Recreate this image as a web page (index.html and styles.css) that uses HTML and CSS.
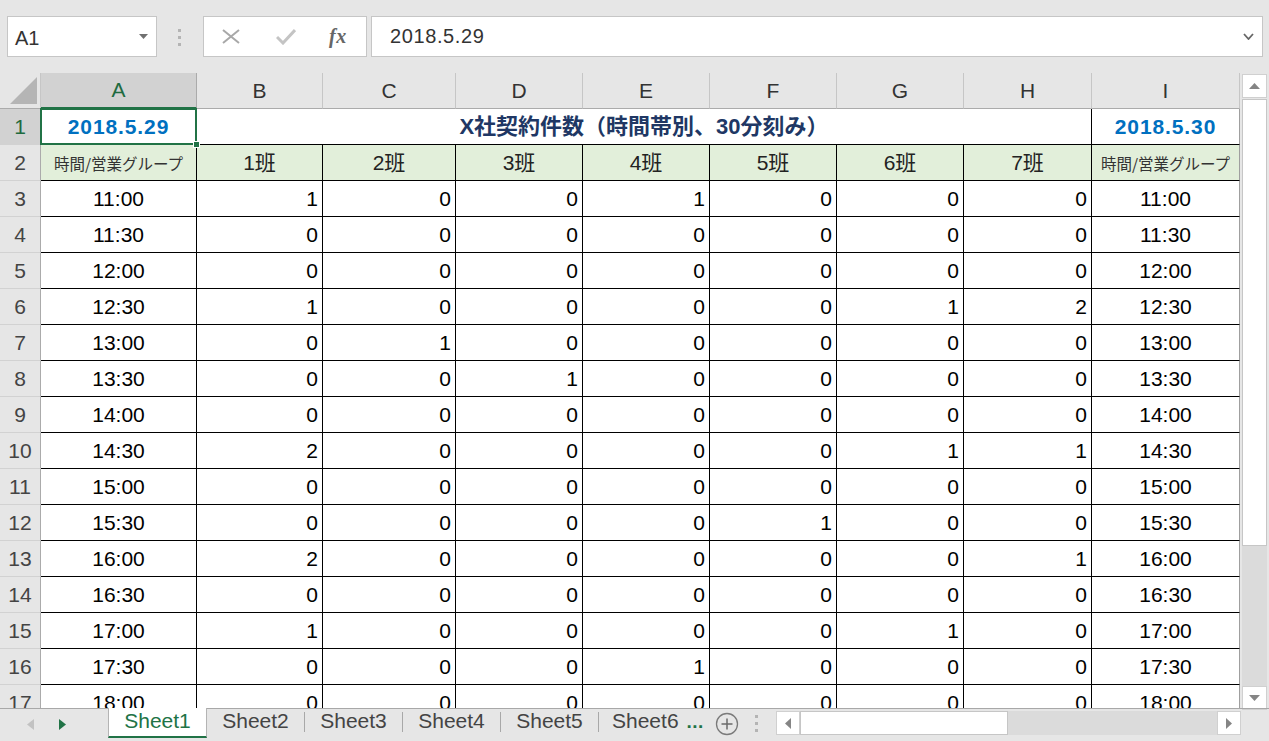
FILE: index.html
```html
<!DOCTYPE html>
<html lang="ja">
<head>
<meta charset="utf-8">
<title>Excel</title>
<link rel="stylesheet" href="styles.css">
</head>
<body>
<div class="app">
  <div class="toolbar">
    <div class="namebox">
      <span class="nb-text">A1</span>
      <svg width="9" height="5" viewBox="0 0 9 5"><path d="M0 0h9L4.5 5z" fill="#707070"/></svg>
    </div>
    <div class="sep">
      <svg width="4" height="18" viewBox="0 0 4 18"><rect x="0" y="0" width="3" height="3" fill="#b4b4b4"/><rect x="0" y="7" width="3" height="3" fill="#b4b4b4"/><rect x="0" y="14" width="3" height="3" fill="#b4b4b4"/></svg>
    </div>
    <div class="fxbox">
      <svg class="ico-x" width="18" height="15" viewBox="0 0 18 15"><path d="M1 1L17 14M17 1L1 14" stroke="#a8a8a8" stroke-width="2" fill="none"/></svg>
      <svg class="ico-ok" width="20" height="16" viewBox="0 0 20 16"><path d="M1 8L7 14L19 1" stroke="#c4c4c4" stroke-width="3" fill="none"/></svg>
      <span class="fx">fx</span>
    </div>
    <div class="formula">
      <span>2018.5.29</span>
      <svg width="11" height="7" viewBox="0 0 11 7"><path d="M1 1L5.5 6L10 1" stroke="#666" stroke-width="1.8" fill="none"/></svg>
    </div>
  </div>

  <div class="main">
    <div class="grid-wrap">
      <table class="grid">
        <colgroup>
          <col style="width:41px"><col style="width:156px"><col style="width:126px"><col style="width:133px"><col style="width:127px"><col style="width:127px"><col style="width:127px"><col style="width:127px"><col style="width:128px"><col style="width:148px">
        </colgroup>
        <thead>
          <tr class="hrow">
            <th class="corner"><svg width="41" height="35" viewBox="0 0 41 35"><path d="M10 31H37V4z" fill="#b5b5b5"/></svg></th>
            <th class="ch sel">A</th><th class="ch">B</th><th class="ch">C</th><th class="ch">D</th><th class="ch">E</th><th class="ch">F</th><th class="ch">G</th><th class="ch">H</th><th class="ch">I</th>
          </tr>
        </thead>
        <tbody>
          <tr>
            <th class="rh sel">1</th>
            <td class="date active">2018.5.29</td>
            <td class="title" colspan="7">X社契約件数（時間帯別、30分刻み）</td>
            <td class="date last">2018.5.30</td>
          </tr>
          <tr class="green">
            <th class="rh">2</th>
            <td class="lbl">時間/営業グループ</td>
            <td>1班</td><td>2班</td><td>3班</td><td>4班</td><td>5班</td><td>6班</td><td>7班</td>
            <td class="lbl last">時間/営業グループ</td>
          </tr>
          <tr><th class="rh">3</th><td class="t">11:00</td><td class="n">1</td><td class="n">0</td><td class="n">0</td><td class="n">1</td><td class="n">0</td><td class="n">0</td><td class="n">0</td><td class="t last">11:00</td></tr>
          <tr><th class="rh">4</th><td class="t">11:30</td><td class="n">0</td><td class="n">0</td><td class="n">0</td><td class="n">0</td><td class="n">0</td><td class="n">0</td><td class="n">0</td><td class="t last">11:30</td></tr>
          <tr><th class="rh">5</th><td class="t">12:00</td><td class="n">0</td><td class="n">0</td><td class="n">0</td><td class="n">0</td><td class="n">0</td><td class="n">0</td><td class="n">0</td><td class="t last">12:00</td></tr>
          <tr><th class="rh">6</th><td class="t">12:30</td><td class="n">1</td><td class="n">0</td><td class="n">0</td><td class="n">0</td><td class="n">0</td><td class="n">1</td><td class="n">2</td><td class="t last">12:30</td></tr>
          <tr><th class="rh">7</th><td class="t">13:00</td><td class="n">0</td><td class="n">1</td><td class="n">0</td><td class="n">0</td><td class="n">0</td><td class="n">0</td><td class="n">0</td><td class="t last">13:00</td></tr>
          <tr><th class="rh">8</th><td class="t">13:30</td><td class="n">0</td><td class="n">0</td><td class="n">1</td><td class="n">0</td><td class="n">0</td><td class="n">0</td><td class="n">0</td><td class="t last">13:30</td></tr>
          <tr><th class="rh">9</th><td class="t">14:00</td><td class="n">0</td><td class="n">0</td><td class="n">0</td><td class="n">0</td><td class="n">0</td><td class="n">0</td><td class="n">0</td><td class="t last">14:00</td></tr>
          <tr><th class="rh">10</th><td class="t">14:30</td><td class="n">2</td><td class="n">0</td><td class="n">0</td><td class="n">0</td><td class="n">0</td><td class="n">1</td><td class="n">1</td><td class="t last">14:30</td></tr>
          <tr><th class="rh">11</th><td class="t">15:00</td><td class="n">0</td><td class="n">0</td><td class="n">0</td><td class="n">0</td><td class="n">0</td><td class="n">0</td><td class="n">0</td><td class="t last">15:00</td></tr>
          <tr><th class="rh">12</th><td class="t">15:30</td><td class="n">0</td><td class="n">0</td><td class="n">0</td><td class="n">0</td><td class="n">1</td><td class="n">0</td><td class="n">0</td><td class="t last">15:30</td></tr>
          <tr><th class="rh">13</th><td class="t">16:00</td><td class="n">2</td><td class="n">0</td><td class="n">0</td><td class="n">0</td><td class="n">0</td><td class="n">0</td><td class="n">1</td><td class="t last">16:00</td></tr>
          <tr><th class="rh">14</th><td class="t">16:30</td><td class="n">0</td><td class="n">0</td><td class="n">0</td><td class="n">0</td><td class="n">0</td><td class="n">0</td><td class="n">0</td><td class="t last">16:30</td></tr>
          <tr><th class="rh">15</th><td class="t">17:00</td><td class="n">1</td><td class="n">0</td><td class="n">0</td><td class="n">0</td><td class="n">0</td><td class="n">1</td><td class="n">0</td><td class="t last">17:00</td></tr>
          <tr><th class="rh">16</th><td class="t">17:30</td><td class="n">0</td><td class="n">0</td><td class="n">0</td><td class="n">1</td><td class="n">0</td><td class="n">0</td><td class="n">0</td><td class="t last">17:30</td></tr>
          <tr><th class="rh">17</th><td class="t">18:00</td><td class="n">0</td><td class="n">0</td><td class="n">0</td><td class="n">0</td><td class="n">0</td><td class="n">0</td><td class="n">0</td><td class="t last">18:00</td></tr>
        </tbody>
      </table>
    </div>
    <div class="vscroll">
      <div class="sbtn"><svg width="11" height="6" viewBox="0 0 11 6"><path d="M0 6L5.5 0L11 6z" fill="#858585"/></svg></div>
      <div class="vthumb"></div>
      <div class="vtrack"></div>
      <div class="sbtn"><svg width="11" height="6" viewBox="0 0 11 6"><path d="M0 0L5.5 6L11 0z" fill="#858585"/></svg></div>
    </div>
  </div>

  <div class="tabbar">
    <div class="nav">
      <svg width="7" height="11" viewBox="0 0 7 11"><path d="M7 0L0 5.5L7 11z" fill="#c2c2c2"/></svg>
      <svg width="7" height="11" viewBox="0 0 7 11"><path d="M0 0L7 5.5L0 11z" fill="#217346"/></svg>
    </div>
    <div class="tab active">Sheet1</div>
    <div class="tab">Sheet2</div><div class="tsep"></div>
    <div class="tab">Sheet3</div><div class="tsep"></div>
    <div class="tab">Sheet4</div><div class="tsep"></div>
    <div class="tab">Sheet5</div><div class="tsep"></div>
    <div class="tab last-tab">Sheet6<span class="more">...</span></div>
    <div class="add"><svg width="24" height="24" viewBox="0 0 24 24"><circle cx="12" cy="12" r="10.5" stroke="#7a7a7a" stroke-width="1.3" fill="none"/><path d="M12 6.5v11M6.5 12h11" stroke="#6a6a6a" stroke-width="1.5"/></svg></div>
    <div class="hdots"><svg width="4" height="18" viewBox="0 0 4 18"><rect x="0" y="0" width="3" height="3" fill="#b4b4b4"/><rect x="0" y="7" width="3" height="3" fill="#b4b4b4"/><rect x="0" y="14" width="3" height="3" fill="#b4b4b4"/></svg></div>
    <div class="hscroll">
      <div class="hbtn"><svg width="6" height="11" viewBox="0 0 6 11"><path d="M6 0L0 5.5L6 11z" fill="#858585"/></svg></div>
      <div class="hthumb"></div>
      <div class="htrack"></div>
      <div class="hbtn"><svg width="6" height="11" viewBox="0 0 6 11"><path d="M0 0L6 5.5L0 11z" fill="#858585"/></svg></div>
    </div>
  </div>
</div>
</body>
</html>
```

FILE: styles.css
```css
html, body {
  margin: 0;
  padding: 0;
}
body {
  width: 1269px;
  height: 741px;
  overflow: hidden;
  background: #e6e6e6;
  font-family: "Liberation Sans", "Noto Sans CJK JP", sans-serif;
  color: #000;
}
.app {
  display: flex;
  flex-direction: column;
  width: 1269px;
  height: 741px;
}

/* ---------- formula bar ---------- */
.toolbar {
  display: flex;
  align-items: center;
  height: 73px;
  padding: 0 6px 0 7px;
  box-sizing: border-box;
  flex-shrink: 0;
}
.namebox {
  width: 150px;
  height: 41px;
  box-sizing: border-box;
  background: #fff;
  border: 1px solid #c6c6c6;
  display: flex;
  align-items: center;
  justify-content: space-between;
  padding: 0 8px 0 7px;
  font-size: 20px;
  color: #333;
}
.nb-text {
  padding-top: 4px;
}
.sep {
  width: 46px;
  display: flex;
  justify-content: center;
  padding-top: 2px;
}
.fxbox {
  width: 164px;
  height: 41px;
  box-sizing: border-box;
  background: #fff;
  border: 1px solid #c6c6c6;
  display: flex;
  align-items: center;
  padding-left: 18px;
}
.ico-x { margin-right: 36px; }
.ico-ok { margin-right: 33px; }
.fx {
  font-family: "Liberation Serif", "DejaVu Serif", serif;
  font-style: italic;
  font-weight: bold;
  font-size: 20px;
  color: #666;
  letter-spacing: 0.5px;
}
.formula {
  flex: 1;
  margin-left: 4px;
  height: 41px;
  box-sizing: border-box;
  background: #fff;
  border: 1px solid #c6c6c6;
  display: flex;
  align-items: center;
  justify-content: space-between;
  padding: 0 8px 0 18px;
  font-size: 20px;
  color: #333;
  letter-spacing: 0.6px;
}

/* ---------- grid ---------- */
.main {
  display: flex;
  height: 636px;
  flex-shrink: 0;
}
.grid-wrap {
  width: 1241px;
  height: 636px;
  overflow: hidden;
  background: #e6e6e6;
}
.grid {
  table-layout: fixed;
  border-collapse: separate;
  border-spacing: 0;
  width: 1240px;
}
.grid th, .grid td {
  padding: 0;
  box-sizing: border-box;
  white-space: nowrap;
  overflow: hidden;
  line-height: 24px;
}
.grid tr { height: 36px; }
.grid tr.hrow { height: 35px; }

.corner {
  background: #e6e6e6;
  border-right: 1px solid #c6c6c6;
  border-bottom: 1px solid #ababab;
  line-height: 0;
}
.grid th.corner { line-height: 0; }
.ch {
  background: #e6e6e6;
  border-right: 1px solid #c6c6c6;
  border-bottom: 1px solid #ababab;
  font-weight: normal;
  font-size: 21px;
  color: #333;
  text-align: center;
  vertical-align: middle;
}
.ch.sel {
  background: #d2d2d2;
  color: #1e6b40;
  border-bottom: 2px solid #217346;
  border-right-color: #ababab;
}
.rh {
  background: #e6e6e6;
  border-right: 1px solid #ababab;
  border-bottom: 1px solid #d2d2d2;
  font-weight: normal;
  font-size: 21px;
  color: #444;
  text-align: center;
  vertical-align: middle;
}
.rh.sel {
  background: #d2d2d2;
  color: #1e6b40;
}

.grid td {
  background: #fff;
  border-right: 1px solid #000;
  border-bottom: 1px solid #000;
  font-size: 21px;
  vertical-align: middle;
  text-align: center;
}
.grid td.last {
  border-right-color: #9f9f9f;
}
.grid td.n {
  text-align: right;
  padding-right: 4px;
}
.grid td.t {
  text-align: center;
}
.date {
  font-weight: bold;
  color: #0070c0;
  font-size: 21px;
  letter-spacing: 0.9px;
}
.date.active {
  position: relative;
  overflow: visible;
}
.date.active::after {
  content: "";
  position: absolute;
  left: -1px;
  top: -1px;
  right: -1px;
  bottom: -1px;
  border: 2px solid #217346;
}
.date.active::before {
  content: "";
  position: absolute;
  right: -4px;
  bottom: -4px;
  width: 7px;
  height: 7px;
  background: #217346;
  border: 1px solid #fff;
  box-sizing: border-box;
  z-index: 2;
}
.grid td.title {
  font-weight: bold;
  color: #203764;
  font-size: 22px;
}
.green td {
  background: #e2efda;
  color: #222;
}
.green td.lbl {
  font-family: "Noto Sans CJK JP", sans-serif;
  font-size: 15.5px;
  color: #333;
}

/* ---------- vertical scrollbar ---------- */
.vscroll {
  width: 28px;
  height: 637px;
  box-sizing: border-box;
  padding: 1px 2px 0 1px;
  display: flex;
  flex-direction: column;
  background: #e6e6e6;
}
.sbtn {
  height: 24px;
  flex-shrink: 0;
  background: #fff;
  border: 1px solid #d0d0d0;
  box-sizing: border-box;
  display: flex;
  align-items: center;
  justify-content: center;
}
.vthumb {
  height: 447px;
  flex-shrink: 0;
  background: #fff;
  border: 1px solid #c6c6c6;
  box-sizing: border-box;
  margin-top: 1px;
}
.vtrack {
  flex: 1;
  background: #dbdbdb;
}

/* ---------- sheet tabs ---------- */
.tabbar {
  display: flex;
  align-items: flex-start;
  height: 32px;
  box-sizing: border-box;
  border-top: 1px solid #a8a8a8;
  margin-top: -1px;
  flex-shrink: 0;
  font-size: 21px;
  color: #444;
}
.nav {
  width: 108px;
  height: 30px;
  display: flex;
  align-items: center;
  padding-left: 27px;
  box-sizing: border-box;
  gap: 25px;
}
.tab {
  width: 97px;
  height: 28px;
  line-height: 24px;
  text-align: center;
  flex-shrink: 0;
}
.tab.active {
  width: 99px;
  height: 30px;
  margin-top: -1px;
  background: #fff;
  color: #217346;
  border-left: 1px solid #b4b4b4;
  border-right: 1px solid #b4b4b4;
  border-bottom: 2px solid #217346;
  box-sizing: border-box;
  line-height: 26px;
}
.tsep {
  width: 1px;
  height: 20px;
  margin-top: 3px;
  background: #a8a8a8;
  flex-shrink: 0;
}
.tab.last-tab {
  width: 108px;
  text-align: left;
  padding-left: 13px;
  box-sizing: border-box;
}
.more {
  color: #217346;
  font-weight: bold;
  margin-left: 8px;
  letter-spacing: 0.5px;
  font-size: 19px;
}
.add {
  width: 40px;
  height: 30px;
  display: flex;
  align-items: center;
  justify-content: center;
}
.hdots {
  width: 20px;
  height: 30px;
  display: flex;
  align-items: center;
  justify-content: center;
  margin-right: 9px;
}
.hscroll {
  width: 465px;
  height: 24px;
  margin-top: 2px;
  display: flex;
}
.hbtn {
  width: 24px;
  height: 24px;
  background: #fff;
  border: 1px solid #d0d0d0;
  box-sizing: border-box;
  display: flex;
  align-items: center;
  justify-content: center;
  flex-shrink: 0;
}
.hthumb {
  width: 208px;
  background: #fff;
  border: 1px solid #c6c6c6;
  box-sizing: border-box;
  flex-shrink: 0;
}
.htrack {
  flex: 1;
  background: #dbdbdb;
}
```
